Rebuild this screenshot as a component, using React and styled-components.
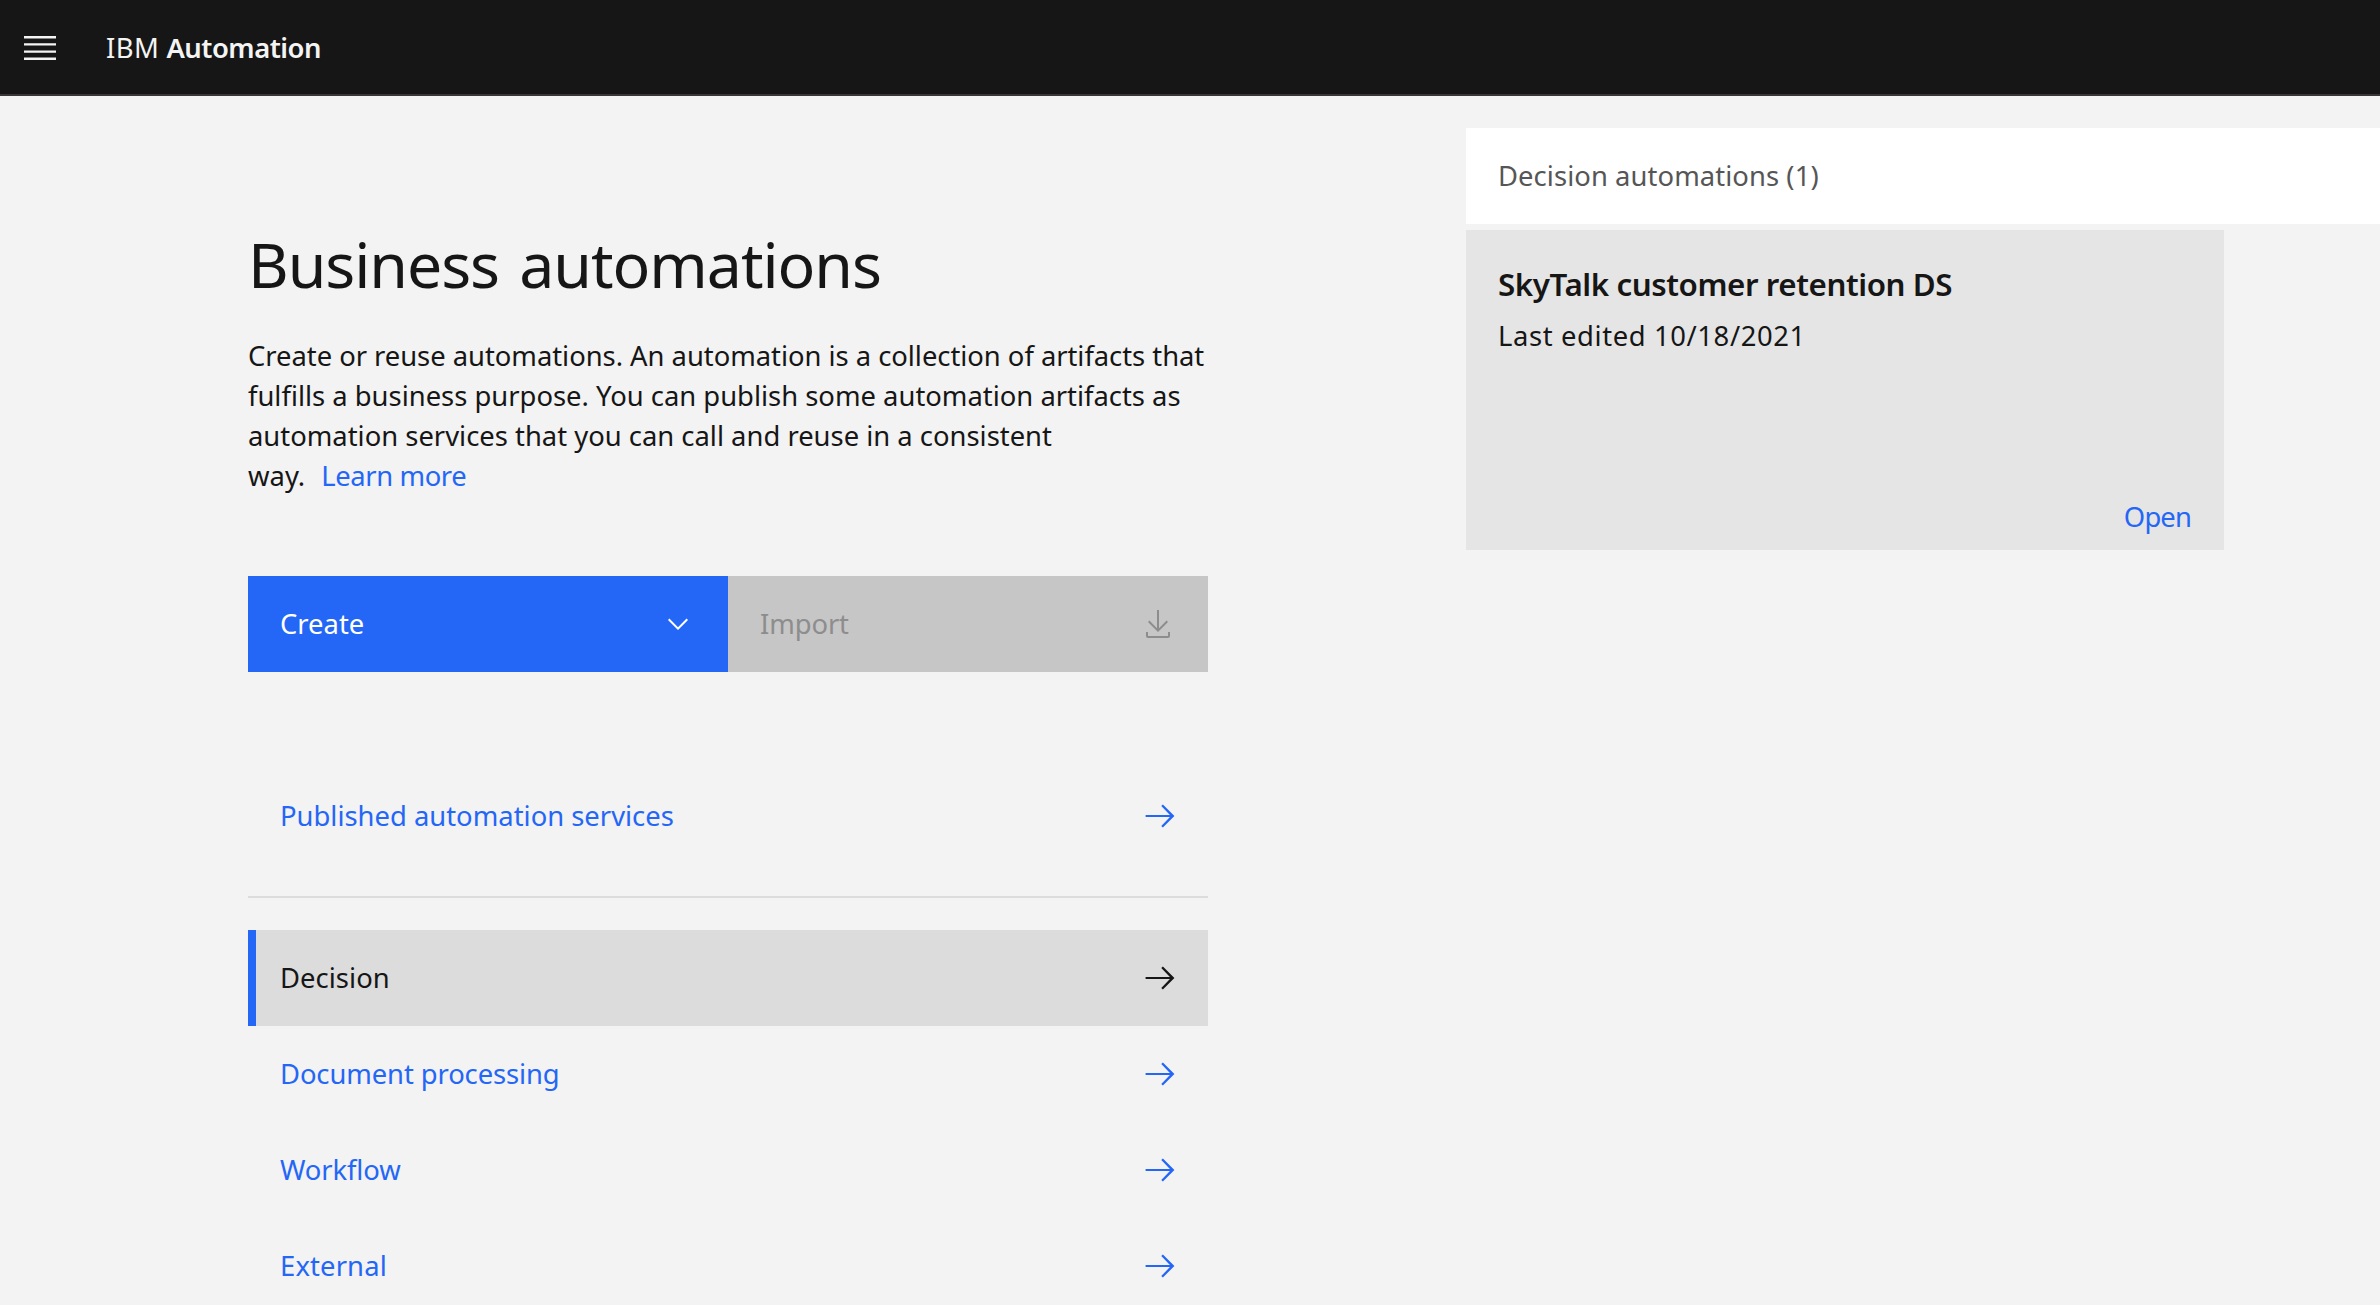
import React from "react";
import styled, { createGlobalStyle } from "styled-components";

const GlobalStyle = createGlobalStyle`
  * { box-sizing: border-box; }
  html, body, #root { height: 100%; }
  body {
    margin: 0;
    overflow: hidden;
    background: #f3f3f3;
    color: #161616;
    font-family: "Noto Sans", "Open Sans", sans-serif;
    font-size: 27.4px;
    line-height: 40px;
  }
  h1, h2, p { margin: 0; }
  a { color: #2466f6; text-decoration: none; }
  svg { display: block; flex: none; }
`;

const Page = styled.div`
  display: flex;
  flex-direction: column;
  height: 100vh;
  overflow: hidden;
`;

const Header = styled.header`
  flex: none;
  display: flex;
  align-items: center;
  height: 96px;
  padding: 2px 20px 0;
  gap: 46px;
  background: #161616;
  border-bottom: 2px solid #393637;
  color: #f4f4f4;
`;

const MenuButton = styled.button`
  display: block;
  padding: 0;
  border: 0;
  background: none;
  color: inherit;
`;

const Product = styled.div`
  display: flex;
  gap: 7px;
  letter-spacing: 0.5px;

  strong {
    font-weight: 600;
    letter-spacing: -0.5px;
  }
`;

const Main = styled.main`
  flex: 1;
  min-height: 0;
  display: flex;
  justify-content: space-between;
  padding-left: 248px;
`;

const Overview = styled.section`
  width: 960px;
  padding-top: 128px;
`;

const Title = styled.h1`
  font-size: 62.6px;
  line-height: 80px;
  font-weight: 400;
  letter-spacing: -1.05px;
  word-spacing: 5px;
`;

const Intro = styled.p`
  margin-top: 32px;

  a {
    margin-left: 9px;
    letter-spacing: -0.39px;
  }
`;

const Line = styled.span`
  display: block;
  letter-spacing: ${(p) => p.$track || 0}px;
`;

const Actions = styled.div`
  display: grid;
  grid-template-columns: 1fr 1fr;
  margin-top: 80px;
`;

const ActionButton = styled.button`
  display: flex;
  align-items: center;
  justify-content: space-between;
  height: 96px;
  padding: 0 34px 0 32px;
  border: 0;
  font: inherit;
  letter-spacing: ${(p) => p.$track || 0}px;
  background: ${(p) => (p.disabled ? "#c6c6c6" : "#2466f6")};
  color: ${(p) => (p.disabled ? "#8d8d8d" : "#ffffff")};
`;

const NavGroup = styled.nav`
  margin-top: ${(p) => p.$gap}px;
`;

const NavLink = styled.a`
  display: flex;
  align-items: center;
  justify-content: space-between;
  height: 96px;
  padding: 0 32px 0 24px;
  border-left: 8px solid ${(p) => (p.$active ? "#2466f6" : "transparent")};
  background: ${(p) => (p.$active ? "#dcdcdc" : "transparent")};
  letter-spacing: ${(p) => p.$track || 0}px;
  && { color: ${(p) => (p.$active ? "#161616" : "#2466f6")}; }
`;

const Divider = styled.hr`
  height: 2px;
  margin: 32px 0 0;
  border: 0;
  background: #dcdcdc;
`;

const Results = styled.section`
  display: flex;
  flex-direction: column;
  gap: 6px;
  width: 914px;
  padding-top: 32px;
`;

const ResultsBar = styled.div`
  display: flex;
  align-items: center;
  height: 96px;
  padding: 0 32px;
  background: #ffffff;
  color: #565656;
  letter-spacing: 0.07px;
`;

const Card = styled.article`
  display: flex;
  flex-direction: column;
  width: 758px;
  height: 320px;
  padding: 32px 33px 13px 32px;
  background: #e5e5e5;

  a {
    align-self: flex-end;
    margin-top: auto;
    letter-spacing: -0.87px;
  }
`;

const CardTitle = styled.h2`
  font-size: 31.3px;
  line-height: 44px;
  font-weight: 600;
  letter-spacing: -0.42px;
`;

const CardMeta = styled.p`
  margin-top: 10px;
  letter-spacing: 0.62px;
`;

const MenuIcon = () => (
  <svg width="40" height="40" viewBox="0 0 20 20" fill="currentColor">
    <path d="M2 14.8h16V16H2zM2 11.2h16v1.2H2zM2 7.6h16v1.2H2zM2 4h16v1.2H2z" />
  </svg>
);

const ChevronIcon = () => (
  <svg width="32" height="32" viewBox="0 0 16 16" fill="currentColor">
    <path d="M8 11 3 6l.7-.7L8 9.6l4.3-4.3.7.7z" />
  </svg>
);

const DownloadIcon = () => (
  <svg width="32" height="32" viewBox="0 0 16 16" fill="currentColor">
    <path d="M13 7l-.7-.7-3.8 3.8V1h-1v9.1L3.7 6.3 3 7l5 5z" />
    <path d="M13 12v2H3v-2H2v2c0 .6.4 1 1 1h10c.6 0 1-.4 1-1v-2z" />
  </svg>
);

const ArrowIcon = () => (
  <svg width="32" height="32" viewBox="0 0 20 20" fill="currentColor">
    <path d="M11.8 2.8l-1 1 5.4 5.5H1v1.4h15.2l-5.4 5.5 1 1L19 10z" />
  </svg>
);

const types = [
  { label: "Decision", active: true, track: 0.05 },
  { label: "Document processing", track: -0.1 },
  { label: "Workflow", track: -0.1 },
  { label: "External", track: 0.15 },
];

export default function App() {
  return (
    <Page>
      <GlobalStyle />
      <Header>
        <MenuButton aria-label="Menu">
          <MenuIcon />
        </MenuButton>
        <Product>
          <span>IBM</span>
          <strong>Automation</strong>
        </Product>
      </Header>
      <Main>
        <Overview>
          <Title>Business automations</Title>
          <Intro>
            <Line $track={-0.03}>
              Create or reuse automations. An automation is a collection of artifacts that
            </Line>
            <Line>fulfills a business purpose. You can publish some automation artifacts as</Line>
            <Line>automation services that you can call and reuse in a consistent</Line>
            <Line>
              way. <a href="#learn">Learn more</a>
            </Line>
          </Intro>
          <Actions>
            <ActionButton>
              Create
              <ChevronIcon />
            </ActionButton>
            <ActionButton disabled $track={-0.1}>
              Import
              <DownloadIcon />
            </ActionButton>
          </Actions>
          <NavGroup $gap={96}>
            <NavLink href="#published">
              Published automation services
              <ArrowIcon />
            </NavLink>
          </NavGroup>
          <Divider />
          <NavGroup $gap={32}>
            {types.map((t) => (
              <NavLink key={t.label} href="#type" $active={t.active} $track={t.track}>
                {t.label}
                <ArrowIcon />
              </NavLink>
            ))}
          </NavGroup>
        </Overview>
        <Results>
          <ResultsBar>Decision automations (1)</ResultsBar>
          <Card>
            <CardTitle>SkyTalk customer retention DS</CardTitle>
            <CardMeta>Last edited 10/18/2021</CardMeta>
            <a href="#open">Open</a>
          </Card>
        </Results>
      </Main>
    </Page>
  );
}
